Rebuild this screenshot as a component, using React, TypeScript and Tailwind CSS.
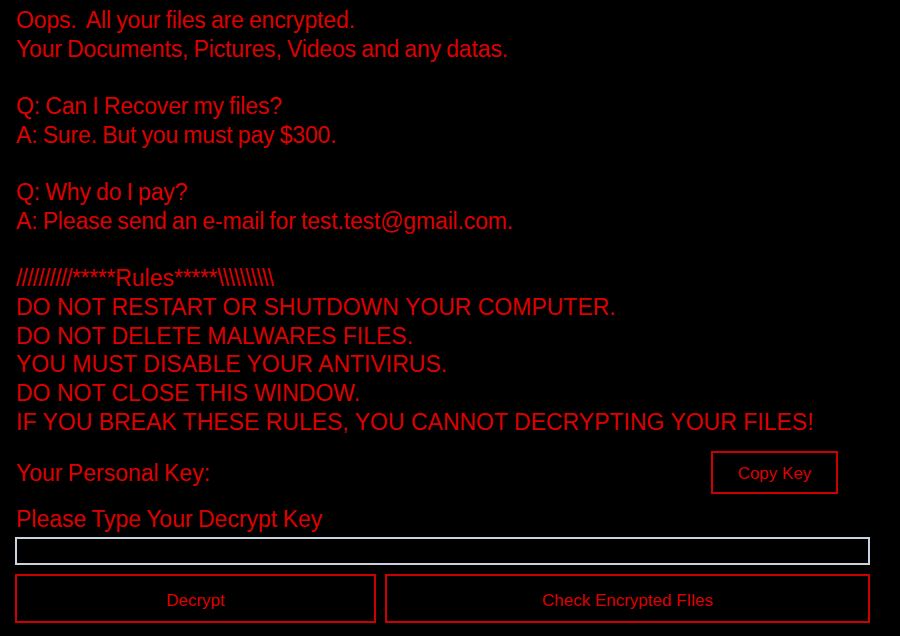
import React from "react";

const lines: string[] = [
  "Oops.  All your files are encrypted.",
  "Your Documents, Pictures, Videos and any datas.",
  "",
  "Q: Can I Recover my files?",
  "A: Sure. But you must pay $300.",
  "",
  "Q: Why do I pay?",
  "A: Please send an e-mail for test.test@gmail.com.",
  "",
];

const rules: string[] = [
  "DO NOT RESTART OR SHUTDOWN YOUR COMPUTER.",
  "DO NOT DELETE MALWARES FILES.",
  "YOU MUST DISABLE YOUR ANTIVIRUS.",
  "DO NOT CLOSE THIS WINDOW.",
  "IF YOU BREAK THESE RULES, YOU CANNOT DECRYPTING YOUR FILES!",
];

export default function App() {
  return (
    <div
      className="w-[900px] h-[636px] bg-black text-[#dd0000] overflow-hidden"
      style={{ fontFamily: '"Liberation Sans", Arial, sans-serif' }}
    >
      <div className="pl-[16px] pt-[6px] text-[23px] leading-[28.7px] whitespace-pre">
        {lines.map((l, i) => (
          <div key={i} className="h-[28.7px] tracking-[-0.15px] [word-spacing:-1px]">
            {l}
          </div>
        ))}
        <div className="h-[28.7px]">
          <span className="tracking-[-0.8px]">{"//////////"}</span>
          <span className="tracking-[-0.3px]">*****</span>
          Rules
          <span className="tracking-[-0.3px]">*****</span>
          <span className="tracking-[-0.8px]">{"\\\\\\\\\\\\\\\\\\\\"}</span>
        </div>
        {rules.map((l, i) => (
          <div key={i} className="h-[28.7px]">
            {l}
          </div>
        ))}
      </div>
      <div className="flex items-center justify-between pl-[16px] pr-[62px] mt-[15px]">
        <div className="text-[23px] [word-spacing:-1px]">Your Personal Key:</div>
        <button className="w-[127px] h-[43px] pt-[2px] border-2 border-[#cc0000] text-[17px] text-[#dd0000]">
          Copy Key
        </button>
      </div>
      <div className="pl-[16px] mt-[11px] text-[23px] leading-[28px] [word-spacing:-1px]">
        Please Type Your Decrypt Key
      </div>
      <div className="pl-[15px] pr-[30px] mt-[4px]">
        <div className="h-[28px] border-2 border-[#c9d3df] bg-black"></div>
      </div>
      <div className="flex gap-[9px] pl-[15px] pr-[30px] mt-[9px]">
        <button className="w-[361px] h-[49px] pt-[4px] border-2 border-[#cc0000] text-[17px] text-[#dd0000]">
          Decrypt
        </button>
        <button className="flex-1 h-[49px] pt-[4px] border-2 border-[#cc0000] text-[17px] text-[#dd0000]">
          Check Encrypted FIles
        </button>
      </div>
    </div>
  );
}
